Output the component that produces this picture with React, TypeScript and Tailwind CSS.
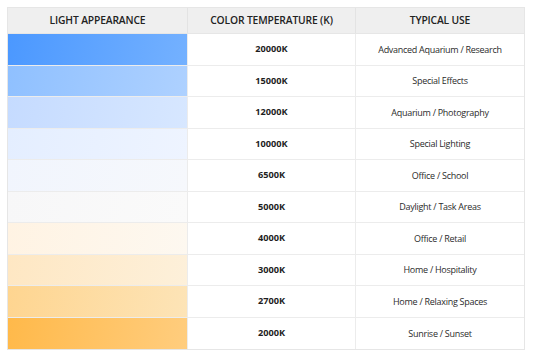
import React from "react";

const rows = [
  { k: "20000K", use: "Advanced Aquarium / Research", from: "#4b98ff", to: "#74b1ff" },
  { k: "15000K", use: "Special Effects", from: "#8fc0ff", to: "#aed1ff" },
  { k: "12000K", use: "Aquarium / Photography", from: "#c5dbff", to: "#d7e7ff" },
  { k: "10000K", use: "Special Lighting", from: "#e4eeff", to: "#eef4ff" },
  { k: "6500K", use: "Office / School", from: "#f1f5fd", to: "#f6f8fc" },
  { k: "5000K", use: "Daylight / Task Areas", from: "#f7f7f8", to: "#fafafa" },
  { k: "4000K", use: "Office / Retail", from: "#fff3e3", to: "#fdf8f0" },
  { k: "3000K", use: "Home / Hospitality", from: "#fee7c3", to: "#fdf0da" },
  { k: "2700K", use: "Home / Relaxing Spaces", from: "#fed590", to: "#fde4b7" },
  { k: "2000K", use: "Sunrise / Sunset", from: "#ffb94a", to: "#ffcd7e" },
];

export default function App() {
  return (
    <div
      className="w-[533px] h-[355px] bg-white pt-[7px] pl-[7px]"
      style={{ fontFamily: '"Open Sans", "Noto Sans", sans-serif' }}
    >
      <div className="w-[518px] border border-[#e6e6e6] bg-white">
        <div className="flex h-[26px] bg-[#efefef] border-b border-[#e6e6e6] text-[10.3px] font-semibold tracking-[-0.15px] text-[#222] uppercase">
          <div className="w-[180px] flex items-center justify-center border-r border-[#e3e3e3]">Light Appearance</div>
          <div className="w-[168px] flex items-center justify-center border-r border-[#e3e3e3]">Color Temperature (K)</div>
          <div className="flex-1 flex items-center justify-center">Typical Use</div>
        </div>
        {rows.map((r, i) => (
          <div
            key={r.k}
            className={`flex h-[31.5px] ${i < rows.length - 1 ? "border-b border-[#ececec]" : ""}`}
          >
            <div
              className="w-[180px] border-r border-[#ececec]"
              style={{ background: `linear-gradient(100deg, ${r.from}, ${r.to})` }}
            />
            <div className="w-[168px] flex items-center justify-center border-r border-[#ececec] text-[9.2px] font-bold text-[#1e1e1e]">
              {r.k}
            </div>
            <div className="flex-1 flex items-center justify-center text-[9px] tracking-[-0.28px] text-[#2b2b2b]">{r.use}</div>
          </div>
        ))}
      </div>
    </div>
  );
}
